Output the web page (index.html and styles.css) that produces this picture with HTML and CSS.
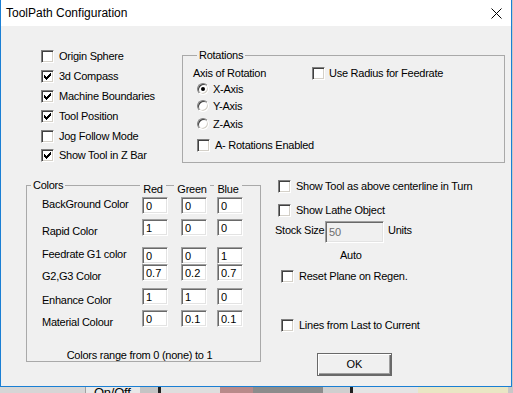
FILE: index.html
```html
<!DOCTYPE html>
<html lang="en">
<head>
  <meta charset="UTF-8" />
  <title>ToolPath Configuration</title>
  <link rel="stylesheet" href="styles.css">
</head>
<body>
  <div class="window">
    <div class="titlebar">
      <span class="title">ToolPath Configuration</span>
      <svg class="close" width="11" height="11" viewBox="0 0 11 11">
        <path d="M0.5 0.5 L10.5 10.5 M10.5 0.5 L0.5 10.5" stroke="#000" stroke-width="1" fill="none"/>
      </svg>
    </div>

    <div class="content">
      <div class="top">
        <!-- display options -->
        <div class="opts">
          <label class="chk"><span class="box"></span>Origin Sphere</label>
          <label class="chk"><span class="box"><svg class="tick" width="7" height="7" viewBox="0 0 7 7" shape-rendering="crispEdges"><path d="M0 2h1v3h-1zM1 3h1v3h-1zM2 4h1v3h-1zM3 3h1v3h-1zM4 2h1v3h-1zM5 1h1v3h-1zM6 0h1v3h-1z" fill="#000"/></svg></span>3d Compass</label>
          <label class="chk"><span class="box"><svg class="tick" width="7" height="7" viewBox="0 0 7 7" shape-rendering="crispEdges"><path d="M0 2h1v3h-1zM1 3h1v3h-1zM2 4h1v3h-1zM3 3h1v3h-1zM4 2h1v3h-1zM5 1h1v3h-1zM6 0h1v3h-1z" fill="#000"/></svg></span>Machine Boundaries</label>
          <label class="chk"><span class="box"><svg class="tick" width="7" height="7" viewBox="0 0 7 7" shape-rendering="crispEdges"><path d="M0 2h1v3h-1zM1 3h1v3h-1zM2 4h1v3h-1zM3 3h1v3h-1zM4 2h1v3h-1zM5 1h1v3h-1zM6 0h1v3h-1z" fill="#000"/></svg></span>Tool Position</label>
          <label class="chk"><span class="box"></span>Jog Follow Mode</label>
          <label class="chk"><span class="box"><svg class="tick" width="7" height="7" viewBox="0 0 7 7" shape-rendering="crispEdges"><path d="M0 2h1v3h-1zM1 3h1v3h-1zM2 4h1v3h-1zM3 3h1v3h-1zM4 2h1v3h-1zM5 1h1v3h-1zM6 0h1v3h-1z" fill="#000"/></svg></span>Show Tool in Z Bar</label>
        </div>

        <!-- Rotations -->
        <fieldset class="group rot">
          <legend>Rotations</legend>
          <div class="rot-head">
            <span class="axis-label">Axis of Rotation</span>
            <label class="chk chk-tight"><span class="box"></span>Use Radius for Feedrate</label>
          </div>
          <div class="radios">
            <label class="rad"><span class="ring"><span class="dot"></span></span>X-Axis</label>
            <label class="rad"><span class="ring"></span>Y-Axis</label>
            <label class="rad"><span class="ring"></span>Z-Axis</label>
          </div>
          <label class="chk a-rot"><span class="box"></span>A- Rotations Enabled</label>
        </fieldset>
      </div>

      <div class="bottom">
        <!-- Colors -->
        <fieldset class="group colors">
          <legend>Colors</legend>
          <div class="color-grid">
            <span></span>
            <span class="hd"><span>Red</span></span>
            <span class="hd"><span>Green</span></span>
            <span class="hd"><span>Blue</span></span>

            <span class="lbl up">BackGround Color</span>
            <input class="num" value="0"><input class="num" value="0"><input class="num" value="0">

            <span class="lbl">Rapid Color</span>
            <input class="num" value="1"><input class="num" value="0"><input class="num" value="0">

            <span class="lbl up">Feedrate G1 color</span>
            <input class="num" value="0"><input class="num" value="0"><input class="num" value="1">

            <span class="lbl">G2,G3 Color</span>
            <input class="num" value="0.7"><input class="num" value="0.2"><input class="num" value="0.7">

            <span class="lbl">Enhance Color</span>
            <input class="num" value="1"><input class="num" value="1"><input class="num" value="0">

            <span class="lbl">Material Colour</span>
            <input class="num" value="0"><input class="num" value="0.1"><input class="num" value="0.1">
          </div>
          <p class="note">Colors range from 0 (none) to 1</p>
        </fieldset>

        <div class="side">
          <label class="chk s-above"><span class="box"></span>Show Tool as above centerline in Turn</label>
          <label class="chk s-lathe"><span class="box"></span>Show Lathe Object</label>
          <div class="stock-row">
            <span class="stock-label">Stock Size</span>
            <input class="num stock" value="50" disabled>
            <span class="units">Units</span>
          </div>
          <span class="auto">Auto</span>
          <label class="chk s-reset"><span class="box"></span>Reset Plane on Regen.</label>
          <label class="chk s-lines"><span class="box"></span>Lines from Last to Current</label>
          <button class="btn" type="button">OK</button>
        </div>
      </div>
    </div>
  </div>

  <!-- what shows of the app behind the dialog -->
  <div class="desk">
    <span class="seg seg-a"></span>
    <span class="seg seg-b">On/Off</span>
    <span class="seg seg-c"></span>
    <span class="seg seg-line"></span>
    <span class="seg seg-d"></span>
    <span class="seg seg-e"></span>
    <span class="seg seg-f"></span>
    <span class="seg seg-g"></span>
    <span class="seg seg-line"></span>
    <span class="seg seg-h"></span>
    <span class="seg seg-i"></span>
  </div>
</body>
</html>
```

FILE: styles.css
```css
* {
  box-sizing: border-box;
}

body {
  margin: 0;
  width: 513px;
  height: 393px;
  overflow: hidden;
  background: #c8c8c8;
  font-family: 'Liberation Sans', Arial, sans-serif;
  font-size: 11px;
  letter-spacing: -0.25px;
  color: #000;
}

.window {
  width: 512px;
  height: 387px;
  border: 1px solid #1a7fd4;
  border-top: none;
  background: #f0f0f0;
  display: flex;
  flex-direction: column;
}

.titlebar {
  height: 26px;
  flex: none;
  background: #fff;
  display: flex;
  align-items: center;
  padding-left: 5px;
  font-size: 12px;
  letter-spacing: normal;
}

.close {
  margin-left: auto;
  margin-right: 9px;
}

.content {
  flex: 1;
  padding-top: 21px;
}

.top {
  display: flex;
  align-items: flex-start;
  height: 119px;
}

.opts {
  width: 181px;
  padding-left: 40px;
}

/* checkbox */
.chk {
  display: flex;
  align-items: center;
  gap: 5px;
  height: 13px;
  line-height: 13px;
  white-space: nowrap;
}

.opts .chk {
  height: 19.8px;
}

.chk-tight {
  gap: 4px;
}

.box {
  width: 13px;
  height: 13px;
  flex: none;
  background: #fff;
  border: 1px solid;
  border-color: #808080 #fff #fff #808080;
  box-shadow: inset 1px 1px 0 #404040, inset -1px -1px 0 #d4d0c8;
  display: flex;
  align-items: center;
  justify-content: center;
}

.tick {
  display: block;
}

/* radio */
.rad {
  display: flex;
  align-items: center;
  gap: 4px;
  height: 17.6px;
}

.ring {
  width: 12px;
  height: 12px;
  flex: none;
  border-radius: 50%;
  background: #fff;
  border: 1px solid;
  border-color: #808080 #fff #fff #808080;
  box-shadow: inset 1px 1px 0 #404040, inset -1px -1px 0 #d4d0c8;
  display: flex;
  align-items: center;
  justify-content: center;
}

.dot {
  width: 4px;
  height: 4px;
  border-radius: 50%;
  background: #000;
}

/* group boxes */
.group {
  margin: 0;
  padding: 0;
  min-width: 0;
  border: 1px solid #a9a9a9;
}

.group legend {
  margin-left: 4px;
  padding: 0 2px;
  line-height: 13px;
}

.rot {
  width: 323px;
  height: 114px;
  margin-top: 1.5px;
  padding-left: 10px;
}

.rot-head {
  display: flex;
  align-items: center;
  height: 13px;
  margin-top: 5.5px;
  line-height: 13px;
}

.axis-label {
  width: 119px;
}

.radios {
  padding-left: 4px;
}

.a-rot {
  margin-top: 6.7px;
  padding-left: 4px;
}

.bottom {
  display: flex;
  align-items: flex-start;
  margin-top: 12.5px;
  padding-left: 25px;
}

.colors {
  width: 235px;
  height: 183px;
}

.color-grid {
  display: grid;
  grid-template-columns: 100px 39px 36px 26px;
  grid-template-rows: 14.5px 22px 28px 17px 24px 22px 17px;
  margin-top: -9px;
  padding-left: 15px;
  align-items: start;
}

.hd {
  width: 26px;
  margin-left: -2px;
  display: flex;
  justify-content: center;
  line-height: 13px;
}

.hd span {
  background: #f0f0f0;
  padding: 0 3px;
}

.lbl {
  line-height: 13px;
  margin-top: 5.5px;
  white-space: nowrap;
}

.lbl.up {
  margin-top: 1px;
}

.num {
  width: 26px;
  height: 17px;
  margin: 0;
  padding: 0 0 0 3px;
  font: inherit;
  color: #000;
  background: #fff;
  border: 1px solid;
  border-color: #a0a0a0 #fff #fff #a0a0a0;
  box-shadow: inset 1px 1px 0 #696969, inset -1px -1px 0 #e3e3e3;
  outline: none;
}

.note {
  margin: 21.5px 0 0;
  padding-right: 8px;
  line-height: 13px;
  text-align: center;
}

/* right hand options */
.side {
  margin-left: 14px;
  display: flex;
  flex-direction: column;
  align-items: flex-start;
}

.s-above {
  margin-top: 1.7px;
  padding-left: 3px;
}

.s-lathe {
  margin-top: 10.6px;
  padding-left: 3px;
}

.stock-row {
  display: flex;
  align-items: flex-start;
  margin-top: 4.2px;
  line-height: 13px;
  white-space: nowrap;
}

.stock-label {
  width: 50px;
  padding-top: 3px;
}

.num.stock {
  width: 59px;
  height: 22px;
  background: #f0f0f0;
  color: #6d6d6d;
}

.units {
  margin-left: 4px;
  padding-top: 3px;
}

.auto {
  margin-top: 6.5px;
  padding-left: 65px;
  line-height: 13px;
}

.s-reset {
  margin-top: 7.5px;
  padding-left: 6px;
}

.s-lines {
  margin-top: 36.5px;
  padding-left: 6px;
}

.btn {
  margin-top: 20.5px;
  margin-left: 42px;
  width: 75px;
  height: 23px;
  padding: 0;
  font: inherit;
  color: #000;
  background: #f0f0f0;
  border: 1px solid #696969;
  box-shadow: inset 1px 1px 0 #fff, inset -1px -1px 0 #696969, inset -2px -2px 0 #a0a0a0;
}

/* background strip */
.desk {
  display: flex;
  height: 6px;
  overflow: hidden;
}

.seg {
  display: block;
  height: 6px;
}

.seg-a { width: 85px; background: #d6d6d6; }
.seg-b {
  width: 55px;
  background: #e8e8e8;
  border-left: 1px solid #a0a0a0;
  font-size: 13px;
  line-height: 12px;
  padding-left: 8px;
}
.seg-c { width: 18px; background: #c4c4c4; }
.seg-line { width: 3px; background: #202020; }
.seg-d { width: 59px; background: #dedede; }
.seg-e { width: 33px; background: #b88a8a; }
.seg-f { width: 70px; background: #8c8c8c; }
.seg-g { width: 27px; background: #cfcfcf; }
.seg-h { width: 65px; background: #e4e4e4; }
.seg-i { width: 90px; background: #e9e6c4; }
```
